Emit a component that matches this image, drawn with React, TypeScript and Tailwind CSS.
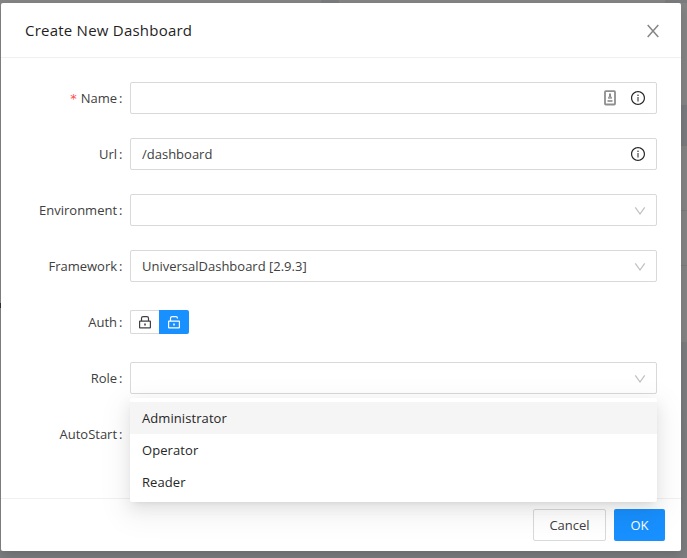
import type { ReactNode } from "react";
import { AiOutlineInfoCircle } from "react-icons/ai";

function Row({ label, required, children }: { label: string; required?: boolean; children?: ReactNode }) {
  return (
    <div className="flex h-8 items-center">
      <label className="flex w-[105px] shrink-0 items-center justify-end pr-[7.5px] pt-px">
        {required && <span className="mr-1 font-['DejaVu_Sans'] text-[13px] text-[#ff4d4f]">*</span>}
        <span>{label}</span>
        <span className="ml-[2px]">:</span>
      </label>
      {children}
    </div>
  );
}

function Field({ value, children }: { value?: string; children?: ReactNode }) {
  return (
    <div className="flex h-8 flex-1 items-center justify-between rounded-xs border border-[#d9d9d9] bg-white pl-[11px] pr-[10px]">
      <span className="pt-px">{value}</span>
      <span className="flex items-center gap-[14px]">{children}</span>
    </div>
  );
}

function Info() {
  return <AiOutlineInfoCircle className="size-4 text-[#262626]" />;
}

function Arrow() {
  return (
    <svg className="mt-px" width="12" height="10" viewBox="0 0 12 10" fill="none" stroke="#bfbfbf" strokeWidth="1.2">
      <path d="M1.3 1.3L6 8l4.7-6.7" />
    </svg>
  );
}

function Close() {
  return (
    <svg width="14" height="14" viewBox="0 0 14 14" fill="none" stroke="#868686" strokeWidth="1.5">
      <path d="M1.7 1l10.6 12M12.3 1L1.7 13" />
    </svg>
  );
}

function Lock({ open, className }: { open?: boolean; className: string }) {
  return (
    <svg className={className} width="14" height="14" viewBox="0 0 14 14" fill="none" stroke="currentColor" strokeWidth="1.2">
      <rect x="1.6" y="6.1" width="10.8" height="6.8" rx="0.4" />
      <path d={open ? "M3.5 6V3.2C3.5 2.2 4.2 1.6 5.2 1.6h3.6c1 0 1.7.6 1.7 1.8" : "M3.5 6V3.2c0-1 .7-1.6 1.7-1.6h3.6c1 0 1.7.6 1.7 1.6V6"} />
      <path d="M7 8.4v2" strokeWidth="1.6" />
    </svg>
  );
}

function ContactCard() {
  return (
    <svg width="12" height="16" viewBox="0 0 12 16" fill="none">
      <rect x="1" y="1.2" width="10" height="13.3" rx="0.8" stroke="#8e8e8e" strokeWidth="1.8" />
      <path d="M6 3.5v4" stroke="#8a8a8a" strokeWidth="2" />
      <path d="M4 7.7h4M3.5 11h5" stroke="#a0a0a0" strokeWidth="2" />
    </svg>
  );
}

export default function App() {
  return (
    <div className="relative h-[558px] w-[687px] overflow-hidden bg-[#858585] pl-px pt-[3px] font-['Open_Sans','Noto_Sans',sans-serif] text-[13px] text-[#404040]">
      <div className="absolute left-[321px] top-0 h-[3px] w-[18px] bg-[#7b7c7e]" />
      <div className="absolute right-0 top-0 h-[3px] w-[22px] bg-[#7b7c7e]" />
      <div className="absolute right-0 top-[105px] h-[41px] w-[6px] bg-[#797b7e]" />
      <div className="absolute right-0 top-[210px] h-px w-[6px] bg-[#7c7c7c]" />
      <div className="absolute right-0 top-[265px] h-px w-[6px] bg-[#7c7c7c]" />
      <div className="absolute right-0 top-[342px] h-[216px] w-[6px] bg-[#7c7d7f]" />
      <div className="absolute bottom-0 left-0 h-[7px] w-full bg-[#7c7d7f]" />
      <div className="absolute left-0 top-[303px] h-[5px] w-px bg-[#333]" />

      <div className="relative flex h-[548px] w-[680px] flex-col rounded-xs bg-white shadow-[0_4px_12px_rgba(0,0,0,0.15)]">
        <header className="flex h-[55px] shrink-0 items-center justify-between border-b border-[#f0f0f0] pl-6 pr-[21px]">
          <h1 className="text-[15px] font-medium tracking-[0.23px] text-[#1f1f1f]">Create New Dashboard</h1>
          <span className="pt-[2px]">
            <Close />
          </span>
        </header>

        <main className="flex flex-1 flex-col gap-6 px-6 pt-6">
          <Row label="Name" required>
            <Field>
              <ContactCard />
              <Info />
            </Field>
          </Row>
          <Row label="Url">
            <Field value="/dashboard">
              <Info />
            </Field>
          </Row>
          <Row label="Environment">
            <Field>
              <Arrow />
            </Field>
          </Row>
          <Row label="Framework">
            <Field value="UniversalDashboard [2.9.3]">
              <Arrow />
            </Field>
          </Row>
          <Row label="Auth">
            <div className="flex h-6">
              <div className="flex w-[29px] items-center justify-center rounded-l-xs border border-r-0 border-[#d9d9d9]">
                <Lock className="text-[#404040]" />
              </div>
              <div className="flex w-[30px] items-center justify-center rounded-r-xs bg-[#1890ff]">
                <Lock open className="text-white" />
              </div>
            </div>
          </Row>
          <Row label="Role">
            <div className="relative flex flex-1">
              <Field>
                <Arrow />
              </Field>
              <ul className="absolute left-0 top-9 z-10 w-full rounded-xs bg-white py-1 tracking-[0.08px] text-[#262626] shadow-[0_3px_6px_-4px_rgba(0,0,0,0.12),0_6px_16px_0_rgba(0,0,0,0.08),0_9px_28px_8px_rgba(0,0,0,0.05)]">
                <li className="flex h-8 items-center bg-[#f5f5f5] px-3 pt-px">Administrator</li>
                <li className="flex h-8 items-center px-3 pt-px">Operator</li>
                <li className="flex h-8 items-center px-3 pt-px">Reader</li>
              </ul>
            </div>
          </Row>
          <Row label="AutoStart" />
        </main>

        <footer className="flex h-[53px] shrink-0 justify-end gap-2 border-t border-[#f0f0f0] px-4 py-[10px]">
          <button className="h-8 w-[73px] rounded-xs border border-[#d9d9d9] bg-white pt-px">Cancel</button>
          <button className="h-8 w-[51px] rounded-xs bg-[#1890ff] pt-px text-white">OK</button>
        </footer>
      </div>
    </div>
  );
}
